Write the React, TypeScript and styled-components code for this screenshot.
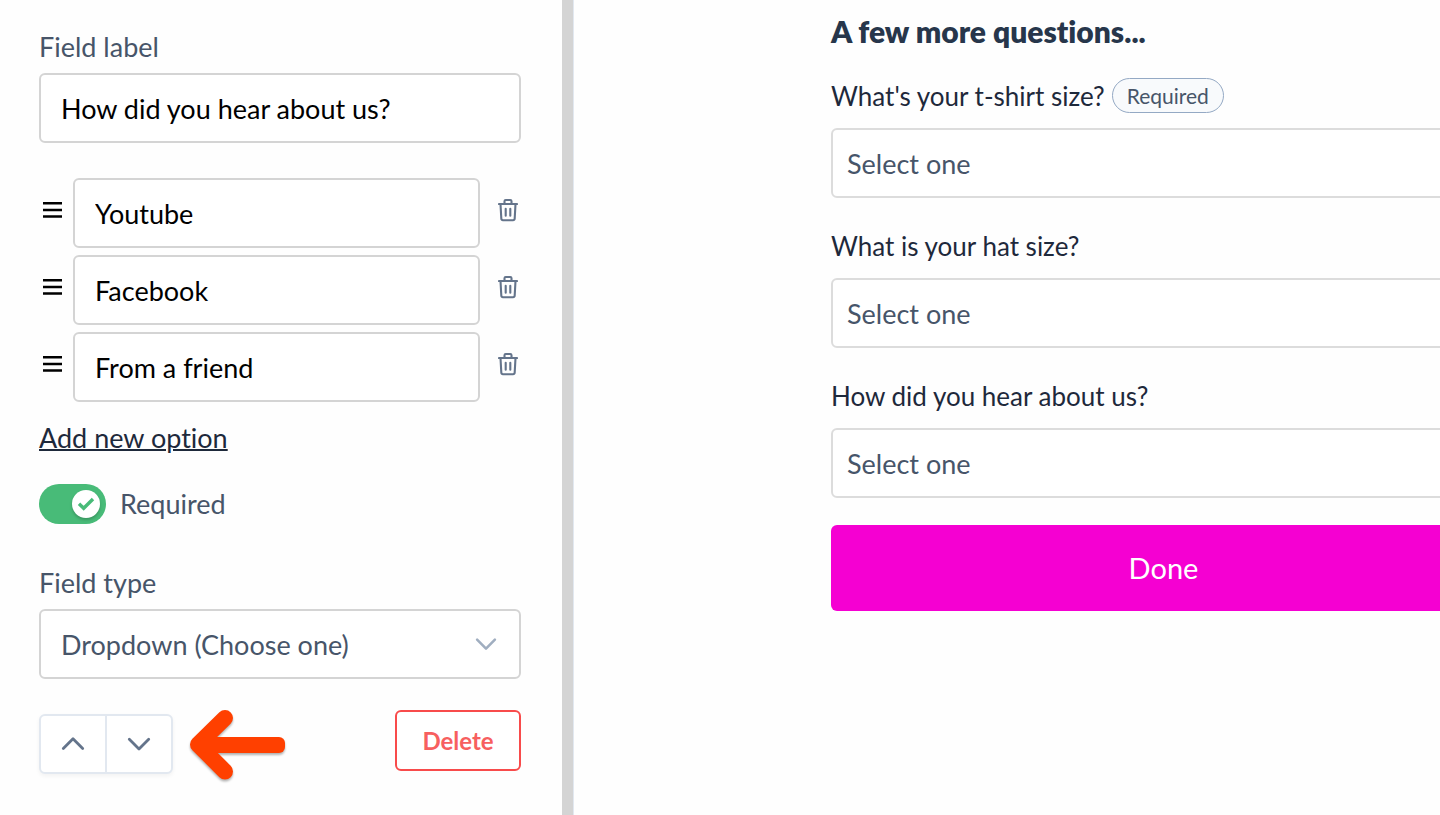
import React, { useState } from "react";
import styled, { createGlobalStyle } from "styled-components";

const GlobalStyle = createGlobalStyle`
  *, *::before, *::after { box-sizing: border-box; }
  body {
    margin: 0;
    background: #fefefe;
    color: #1e293b;
    font-family: Lato, "Liberation Sans", sans-serif;
    font-size: 27px;
    line-height: 32px;
    font-variant-ligatures: none;
  }
  input, select, button { font: inherit; font-variant-ligatures: none; margin: 0; }
  svg { display: block; flex: none; }
`;

const Page = styled.div`
  display: flex;
  min-height: 100vh;
  overflow: hidden;
`;

const Editor = styled.aside`
  flex: 0 0 562px;
  padding: 31px 41px 40px 39px;
`;

const Divider = styled.div`
  flex: 0 0 12px;
  background: #d4d4d4;
  border-right: 1px solid #e2e8f0;
`;

const Preview = styled.main`
  flex: 1;
  min-width: 0;
  padding: 11px 0 40px 257px;
`;

const PreviewForm = styled.form`
  width: calc(100% + 56px);
`;

const Label = styled.label`
  display: block;
  color: #475569;
  margin-bottom: 10px;
`;

const TextInput = styled.input`
  display: block;
  width: 100%;
  min-width: 0;
  height: 70px;
  padding: 0 20px;
  border: 2px solid #d4d4d4;
  border-radius: 6px;
  background: #fff;
  color: #000;
`;

const OptionList = styled.ul`
  display: flex;
  flex-direction: column;
  gap: 7px;
  list-style: none;
  margin: 35px 0 20px;
  padding: 0;
`;

const OptionRow = styled.li`
  display: flex;
  align-items: center;
`;

const IconButton = styled.button<{ $side: "left" | "right" }>`
  flex: none;
  display: flex;
  justify-content: ${(p) => (p.$side === "left" ? "flex-start" : "flex-end")};
  width: ${(p) => (p.$side === "left" ? 34 : 41)}px;
  padding: 0 3px 7px;
  border: 0;
  background: none;
  color: ${(p) => (p.$side === "left" ? "#000" : "#64748b")};
`;

const AddLink = styled.a`
  display: block;
  width: fit-content;
  color: #1e293b;
  text-decoration: underline;
  text-decoration-thickness: 2px;
`;

const ToggleLabel = styled.label`
  display: flex;
  align-items: center;
  gap: 14px;
  margin: 30px 0 43px;
  color: #475569;
`;

const Track = styled.span`
  position: relative;
  display: block;
  width: 67px;
  height: 40px;
`;

const Switch = styled.input`
  appearance: none;
  display: block;
  width: 100%;
  height: 100%;
  border-radius: 20px;
  background: #cbd5e0;
  &:checked { background: #48bb78; }
`;

const Knob = styled.span<{ $on: boolean }>`
  position: absolute;
  top: 6px;
  left: ${(p) => (p.$on ? 33 : 6)}px;
  display: grid;
  place-items: center;
  width: 28px;
  height: 28px;
  border-radius: 50%;
  background: #fff;
  color: #48bb78;
  box-shadow: 0 2px 3px rgba(0, 0, 0, 0.2);
  pointer-events: none;
`;

const SelectWrap = styled.div`
  display: grid;
  align-items: center;
  > * { grid-area: 1 / 1; }
  > svg {
    justify-self: end;
    margin-right: 24px;
    color: #a0aec0;
    pointer-events: none;
  }
`;

const Select = styled.select<{ $inset: number; $tone: string }>`
  appearance: none;
  display: block;
  width: 100%;
  height: 70px;
  padding: 2px 48px 0 ${(p) => p.$inset}px;
  border: 2px solid ${(p) => p.$tone};
  border-radius: 6px;
  background: #fff;
  color: #475569;
`;

const Actions = styled.div`
  display: flex;
  align-items: flex-end;
  gap: 17px;
  margin-top: 31px;
`;

const MoveGroup = styled.div`
  display: flex;
  width: 134px;
  height: 60px;
  margin-bottom: -3px;
  border: 2px solid #e2e8f0;
  border-radius: 6px;
  background: #fff;
  box-shadow: 0 2px 4px rgba(0, 0, 0, 0.05);
`;

const MoveButton = styled.button`
  flex: 1;
  display: grid;
  place-items: center;
  padding: 0;
  border: 0;
  background: none;
  color: #64748b;
  & + & { border-left: 2px solid #e2e8f0; }
`;

const PointerArrow = styled.svg`
  margin-bottom: -9px;
  overflow: visible;
  filter: drop-shadow(0 2px 1px rgba(0, 0, 0, 0.3));
`;

const DeleteButton = styled.button`
  width: 126px;
  height: 61px;
  margin-left: auto;
  padding: 0;
  border: 2px solid #f84b4b;
  border-radius: 6px;
  background: #fff;
  color: #f75f5f;
  font-size: 24px;
  font-weight: 700;
`;

const Heading = styled.h1`
  margin: 0 0 27px;
  color: #27364b;
  font-size: 30px;
  line-height: 40px;
  font-weight: 800;
`;

const Question = styled.div`
  margin-bottom: 30px;
`;

const QuestionLabel = styled.label`
  display: flex;
  align-items: center;
  gap: 7px;
  height: 35px;
  margin-bottom: 15px;
  font-size: 26px;
`;

const Pill = styled.span`
  height: 35px;
  padding: 1px 14px 0;
  border: 1px solid #94a9c4;
  border-radius: 18px;
  background: #f8fafc;
  color: #475569;
  font-size: 21px;
`;

const DoneButton = styled.button`
  display: block;
  width: 100%;
  height: 86px;
  margin-top: -3px;
  padding: 0;
  border: 0;
  border-radius: 6px;
  background: #f500d2;
  color: #fff;
  font-size: 29px;
`;

const GripIcon = () => (
  <svg width="21" height="18" viewBox="0 0 21 18" fill="none" stroke="currentColor" strokeWidth="2.5">
    <path d="M1 2.2H20M1 8.900H20M1 15.600H20" />
  </svg>
);

const TrashIcon = () => (
  <svg width="20" height="24" viewBox="0 0 20 24" fill="none" stroke="currentColor" strokeWidth="2.1" strokeLinecap="round" strokeLinejoin="round">
    <path d="M1 6h18M6.500 6V3.200Q6.500 2 7.700 2h4.600Q13.500 2 13.500 3.200V6M2.500 6l.8 14.500Q3.400 22.200 5 22.200h10Q16.600 22.200 16.700 20.500L17.500 6M7.700 10.700v7M12.300 10.700v7" />
  </svg>
);

const Chevron = ({ up = false, size = 24 }: { up?: boolean; size?: number }) => (
  <svg width={size} height={size} viewBox="0 0 24 24" fill="none" stroke="currentColor" strokeWidth="2.8" strokeLinecap="round" strokeLinejoin="round">
    <path d={up ? "M2.300 16.500L12 6.800 21.700 16.500" : "M2.300 7.300L12 17l9.700-9.700"} />
  </svg>
);

const options = ["Youtube", "Facebook", "From a friend"];
const questions = [
  { id: "shirt", text: "What's your t-shirt size?", required: true },
  { id: "hat", text: "What is your hat size?", required: false },
  { id: "source", text: "How did you hear about us?", required: false },
];

export default function App() {
  const [required, setRequired] = useState(true);
  return (
    <Page>
      <GlobalStyle />
      <Editor>
        <Label htmlFor="field-label">Field label</Label>
        <TextInput id="field-label" defaultValue="How did you hear about us?" />
        <OptionList>
          {options.map((option) => (
            <OptionRow key={option}>
              <IconButton type="button" $side="left" aria-label={`Reorder ${option}`}>
                <GripIcon />
              </IconButton>
              <TextInput aria-label="Option" defaultValue={option} />
              <IconButton type="button" $side="right" aria-label={`Remove ${option}`}>
                <TrashIcon />
              </IconButton>
            </OptionRow>
          ))}
        </OptionList>
        <AddLink href="#add">Add new option</AddLink>
        <ToggleLabel>
          <Track>
            <Switch type="checkbox" checked={required} onChange={(e) => setRequired(e.target.checked)} />
            <Knob $on={required}>
              <svg width="18" height="16" viewBox="0 0 18 16" fill="none" stroke="currentColor" strokeWidth="3.4">
                <path d="M2 7.700l4.700 4.600L16 3" />
              </svg>
            </Knob>
          </Track>
          Required
        </ToggleLabel>
        <Label htmlFor="field-type">Field type</Label>
        <SelectWrap>
          <Select id="field-type" $inset={20} $tone="#d4d4d4">
            <option>Dropdown (Choose one)</option>
          </Select>
          <Chevron size={22} />
        </SelectWrap>
        <Actions>
          <MoveGroup>
            <MoveButton type="button" aria-label="Move up"><Chevron up /></MoveButton>
            <MoveButton type="button" aria-label="Move down"><Chevron /></MoveButton>
          </MoveGroup>
          <PointerArrow width="95" height="70" viewBox="0 0 95 70" fill="none" stroke="#ff4000" strokeWidth="16" strokeLinecap="round" strokeLinejoin="round" aria-hidden="true">
            <path d="M35 8L8 34.500 35 61.500" />
            <rect x="10" y="27" width="85" height="16" rx="6" fill="#ff4000" stroke="none" />
          </PointerArrow>
          <DeleteButton type="button">Delete</DeleteButton>
        </Actions>
      </Editor>
      <Divider />
      <Preview>
        <PreviewForm onSubmit={(e) => e.preventDefault()}>
          <Heading>A few more questions...</Heading>
          {questions.map((q) => (
            <Question key={q.id}>
              <QuestionLabel htmlFor={q.id}>
                {q.text}
                {q.required && <Pill>Required</Pill>}
              </QuestionLabel>
              <Select id={q.id} $inset={14} $tone="#dcdcdc">
                <option>Select one</option>
              </Select>
            </Question>
          ))}
          <DoneButton type="submit">Done</DoneButton>
        </PreviewForm>
      </Preview>
    </Page>
  );
}
